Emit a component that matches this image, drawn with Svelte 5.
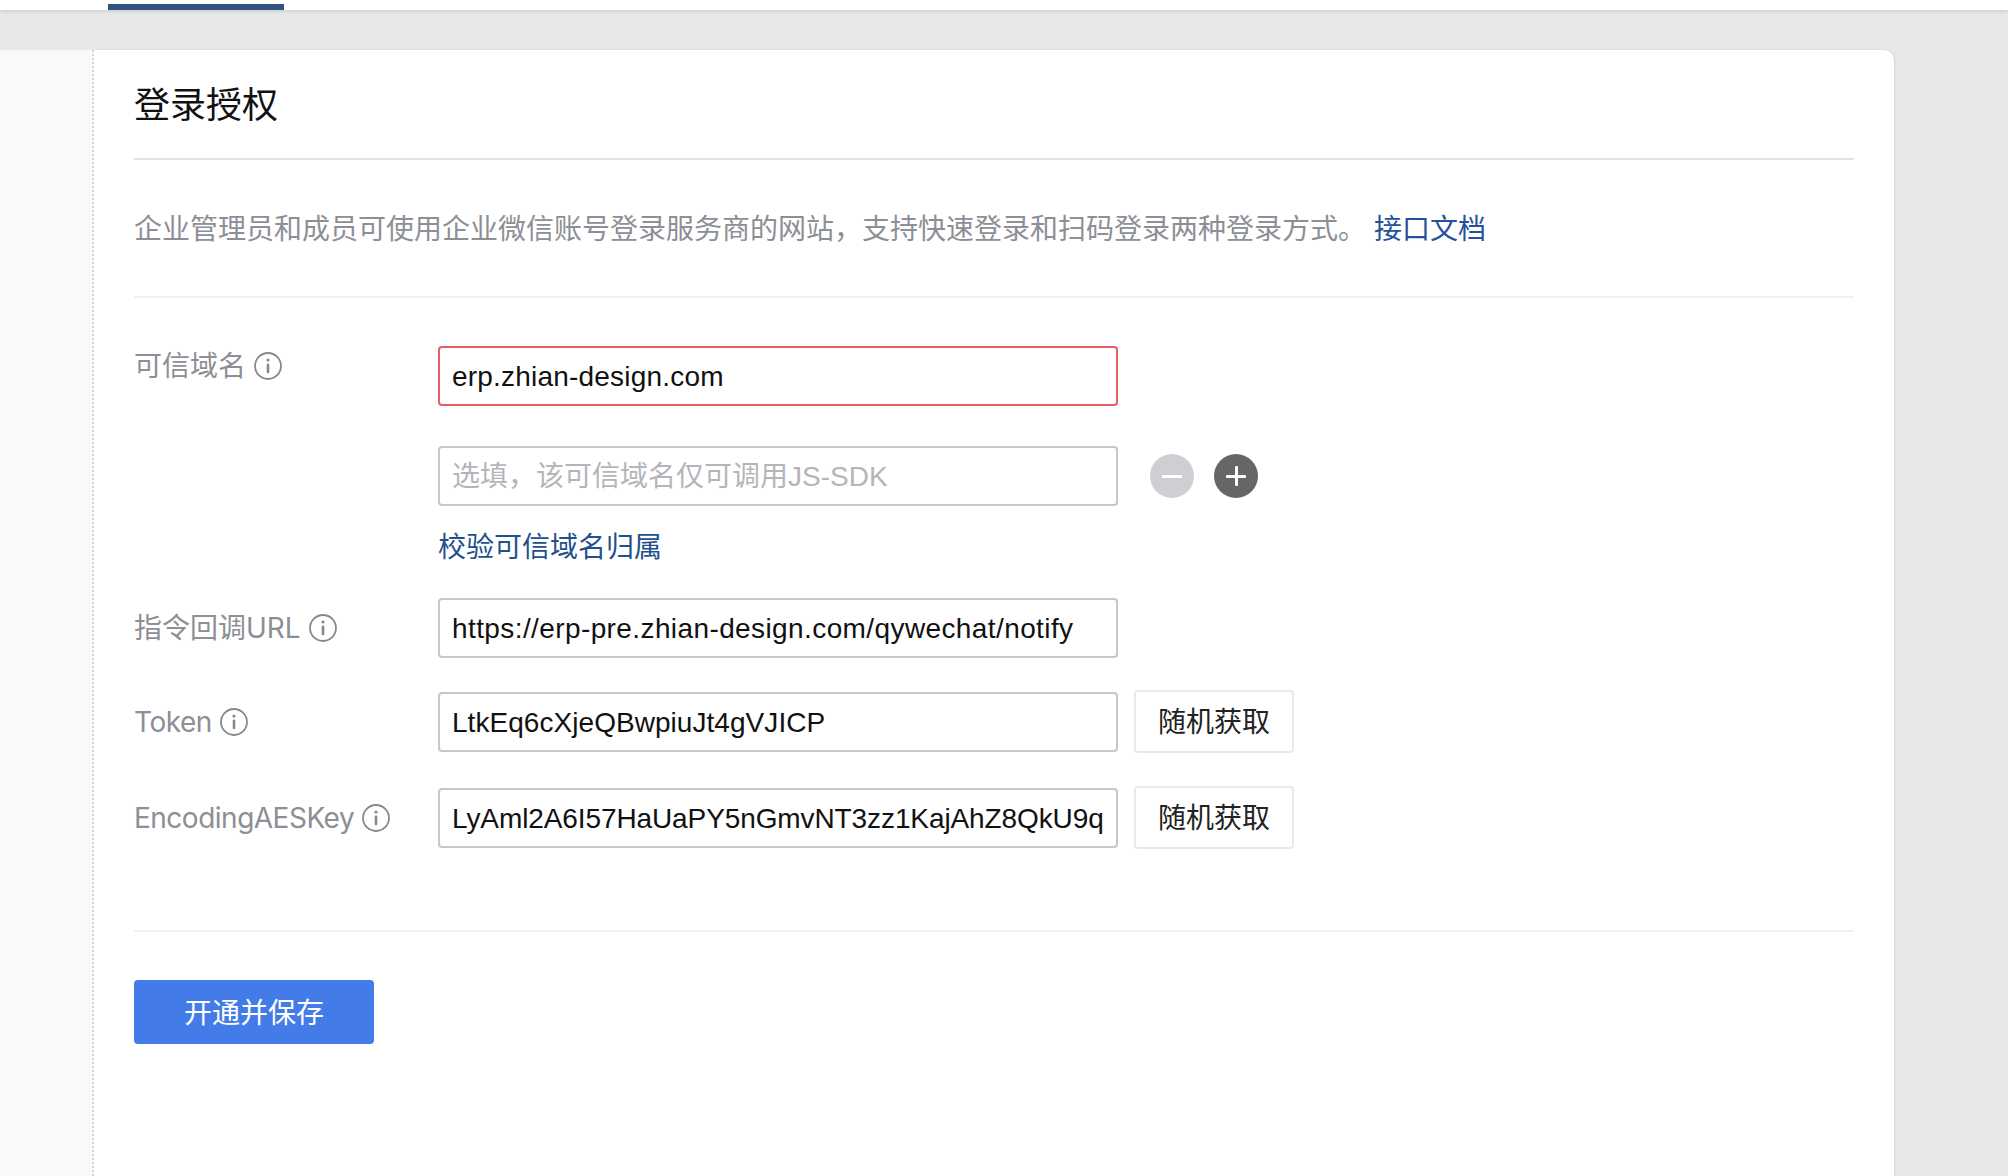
<script lang="ts">
	const rows = [
		{ label: 'Token', value: 'LtkEq6cXjeQBwpiuJt4gVJICP', cls: 'token' },
		{ label: 'EncodingAESKey', value: 'LyAml2A6I57HaUaPY5nGmvNT3zz1KajAhZ8QkU9q', cls: 'aes' }
	];
</script>

{#snippet info()}
	<svg class="info" viewBox="0 0 28 28" width="28" height="28" aria-hidden="true">
		<circle cx="14" cy="14" r="13" fill="none" stroke="#85888f" stroke-width="1.8" />
		<rect x="12.7" y="11.6" width="2.6" height="9.6" rx="1.2" fill="#85888f" />
		<circle cx="14" cy="8" r="1.6" fill="#85888f" />
	</svg>
{/snippet}

<div class="page">
	<header class="topbar"><span class="tab"></span></header>
	<div class="main">
		<aside class="side"></aside>
		<section class="card">
			<h1>登录授权</h1>
			<p class="desc">
				企业管理员和成员可使用企业微信账号登录服务商的网站，支持快速登录和扫码登录两种登录方式。<a href="#doc">接口文档</a>
			</p>

			<div class="form">
				<div class="row top">
					<div class="label">可信域名 {@render info()}</div>
					<input class="input error" value="erp.zhian-design.com" />
				</div>
				<div class="row second">
					<div class="label"></div>
					<input class="input" placeholder="选填，该可信域名仅可调用JS-SDK" />
					<div class="round-btns">
						<span class="round minus"><i class="h"></i></span>
						<span class="round plus"><i class="h"></i><i class="v"></i></span>
					</div>
				</div>
				<div class="row verify">
					<div class="label"></div>
					<a href="#verify">校验可信域名归属</a>
				</div>
				<div class="row url">
					<div class="label">指令回调URL {@render info()}</div>
					<input class="input" value="https://erp-pre.zhian-design.com/qywechat/notify" />
				</div>
				{#each rows as row}
					<div class="row key">
						<div class="label">{row.label} {@render info()}</div>
						<input class="input {row.cls}" value={row.value} />
						<button class="random">随机获取</button>
					</div>
				{/each}
			</div>

			<div class="footer">
				<button class="save">开通并保存</button>
			</div>
		</section>
	</div>
</div>

<style>
	:global(body) {
		margin: 0;
		background: #e7e8ea;
	}

	.page {
		height: 1176px;
		overflow: hidden;
		display: flex;
		flex-direction: column;
		font-family: 'Inter', 'Noto Sans CJK SC', sans-serif;
	}

	.topbar {
		height: 10px;
		flex: none;
		background: #fff;
		box-shadow: 0 1px 4px rgba(0, 0, 0, 0.14);
		position: relative;
	}

	.tab {
		position: absolute;
		left: 108px;
		top: 4px;
		width: 176px;
		height: 6px;
		background: #34527f;
	}

	.main {
		flex: 1;
		display: flex;
		margin-top: 40px;
		padding-right: 114px;
	}

	.side {
		width: 92px;
		flex: none;
		background: #f8f9fb;
		border-right: 2px dotted #d5d7db;
	}

	.card {
		flex: 1;
		background: #fff;
		border-radius: 0 10px 0 0;
		box-shadow: 1px 0 3px rgba(0, 0, 0, 0.08);
		padding: 0 40px;
	}

	h1 {
		margin: 0;
		height: 108px;
		border-bottom: 2px solid #dfe2e5;
		font-size: 36px;
		font-weight: 400;
		line-height: 110px;
		color: #111;
	}

	.desc {
		margin: 0;
		box-sizing: border-box;
		height: 138px;
		border-bottom: 2px solid #eef0f2;
		font-size: 28px;
		line-height: 138px;
		color: #8c8f95;
	}

	.desc a {
		margin-left: 8px;
		color: #24509c;
		text-decoration: none;
	}

	.form {
		padding-top: 48px;
		display: flex;
		flex-direction: column;
	}

	.row {
		display: flex;
		align-items: center;
	}

	.row.top {
		align-items: flex-start;
	}

	.row.second {
		margin-top: 40px;
	}

	.row.verify {
		margin-top: 21px;
		height: 40px;
	}

	.row.url {
		margin-top: 31px;
	}

	.row.key {
		margin-top: 32px;
	}

	.row.key + .row.key {
		margin-top: 33px;
	}

	.label {
		width: 304px;
		flex: none;
		height: 40px;
		line-height: 40px;
		font-size: 28px;
		color: #8c8f95;
		display: flex;
		align-items: center;
		gap: 8px;
	}

	.key .label {
		letter-spacing: -0.5px;
	}

	.info {
		flex: none;
	}

	.input {
		width: 680px;
		height: 60px;
		box-sizing: border-box;
		border: 2px solid #c6c7c9;
		border-radius: 4px;
		padding: 2px 12px 0;
		background: #fff;
		font-family: 'Liberation Sans', 'Noto Sans CJK SC', sans-serif;
		font-size: 28px;
		color: #111;
		outline: none;
		letter-spacing: 0.4px;
	}

	.input::placeholder {
		color: #b3b5b9;
		letter-spacing: 0;
	}

	.input.error {
		border-color: #e4605e;
		letter-spacing: 0.2px;
	}

	.input.token {
		letter-spacing: 0.05px;
	}

	.input.aes {
		letter-spacing: -0.1px;
	}

	.verify a {
		font-size: 28px;
		line-height: 40px;
		color: #22508c;
		text-decoration: none;
	}

	.round-btns {
		display: flex;
		gap: 20px;
		margin-left: 32px;
	}

	.round {
		width: 44px;
		height: 44px;
		border-radius: 50%;
		position: relative;
		display: block;
	}

	.minus {
		background: #cdcfd2;
	}

	.plus {
		background: #666;
	}

	.round i {
		position: absolute;
		background: #fff;
		border-radius: 1px;
	}

	.round .h {
		left: 12px;
		top: 20.5px;
		width: 20px;
		height: 3px;
	}

	.round .v {
		left: 20.5px;
		top: 12px;
		width: 3px;
		height: 20px;
	}

	.random {
		margin-left: 16px;
		width: 160px;
		height: 63px;
		box-sizing: border-box;
		border: 2px solid #e8e9eb;
		border-radius: 4px;
		background: #fff;
		font-family: inherit;
		font-size: 28px;
		color: #222;
		padding: 0 0 3px;
	}

	.footer {
		margin-top: 81px;
		border-top: 2px solid #eef0f2;
		padding-top: 48px;
	}

	.save {
		width: 240px;
		height: 64px;
		border: none;
		border-radius: 4px;
		background: #437be8;
		color: #fff;
		font-family: inherit;
		font-size: 28px;
		padding: 0 0 2px;
	}
</style>
